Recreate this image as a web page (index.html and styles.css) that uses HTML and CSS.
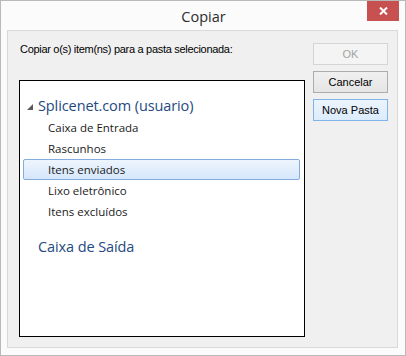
FILE: index.html
```html
<!DOCTYPE html>
<html lang="pt">
<head>
    <meta charset="UTF-8">
    <title>Copiar</title>
    <link rel="stylesheet" href="styles.css">
</head>
<body>
    <div class="window">
        <div class="titlebar">
            <span class="title">Copiar</span>
            <button class="close-btn" aria-label="Fechar">
                <svg width="9" height="8" viewBox="0 0 9 8">
                    <path d="M1 0.5 L8 7.5 M8 0.5 L1 7.5" stroke="#fff" stroke-width="2"/>
                </svg>
            </button>
        </div>
        <div class="client">
            <div class="main">
                <div class="prompt">Copiar o(s) item(ns) para a pasta selecionada:</div>
                <div class="tree">
                    <div class="node root">
                        <svg class="expander" width="6" height="6" viewBox="0 0 6 6">
                            <polygon points="6,0 6,6 0,6" fill="#595959"/>
                        </svg>
                        <span>Splicenet.com (usuario)</span>
                    </div>
                    <div class="node child">Caixa de Entrada</div>
                    <div class="node child">Rascunhos</div>
                    <div class="node child selected">Itens enviados</div>
                    <div class="node child">Lixo eletrônico</div>
                    <div class="node child">Itens excluídos</div>
                    <div class="node root outbox">Caixa de Saída</div>
                </div>
            </div>
            <div class="actions">
                <button class="btn" disabled>OK</button>
                <button class="btn">Cancelar</button>
                <button class="btn focused">Nova Pasta</button>
            </div>
        </div>
    </div>
</body>
</html>
```

FILE: styles.css
```css
html, body {
    margin: 0;
    padding: 0;
    background: #fff;
}
.window {
    width: 406px;
    height: 356px;
    box-sizing: border-box;
    border: 1px solid #b9b9b9;
    background-color: #fbfbfb;
    padding: 0 7px 7px 6px;
    display: flex;
    flex-direction: column;
}
.titlebar {
    height: 29px;
    position: relative;
    display: flex;
    align-items: center;
    justify-content: center;
}
.title {
    font-family: "Open Sans", "Noto Sans", sans-serif;
    font-size: 14.5px;
    color: #2b2b2b;
    margin-top: 2px;
    margin-left: 2px;
}
.close-btn {
    position: absolute;
    top: 0;
    right: -1px;
    width: 32px;
    height: 20px;
    border: none;
    padding: 0;
    background-color: #c75050;
    display: flex;
    align-items: center;
    justify-content: center;
}
.client {
    flex: 1;
    border: 1px solid #d9d9d9;
    background-color: #f0f0f0;
    padding: 12px 9px 10px 11px;
    display: flex;
    gap: 8px;
    font-family: "Liberation Sans", Arial, sans-serif;
    font-size: 11px;
    color: #000;
}
.main {
    width: 286px;
    display: flex;
    flex-direction: column;
}
.prompt {
    padding-left: 1px;
    line-height: 13px;
    height: 13px;
    margin-bottom: 24px;
    letter-spacing: -0.3px;
}
.tree {
    flex: 1;
    border: 1px solid #000;
    background-color: #fff;
    padding: 14px 4px 0 3px;
    font-family: "Open Sans", "Noto Sans", sans-serif;
}
.node {
    height: 21px;
    line-height: 20px;
    box-sizing: border-box;
    border: 1px solid transparent;
    border-radius: 2px;
    white-space: nowrap;
}
.root {
    display: flex;
    align-items: center;
    font-size: 14.5px;
    color: #25497f;
    padding-left: 14px;
    letter-spacing: -0.1px;
}
.root .expander {
    margin-left: -11px;
    margin-right: 5px;
    margin-top: 3px;
}
.child {
    font-size: 11.5px;
    color: #1a1a1a;
    padding-left: 24px;
}
.root + .child {
    margin-top: 1px;
}
.selected {
    border-color: #84acdd;
    background: linear-gradient(#eef5fd, #d5e7fc);
}
.outbox {
    margin-top: 14px;
}
.actions {
    width: 75px;
    display: flex;
    flex-direction: column;
    gap: 6px;
}
.btn {
    height: 22px;
    padding: 0;
    font-family: "Liberation Sans", Arial, sans-serif;
    font-size: 11px;
    color: #000;
    border: 1px solid #acacac;
    background: linear-gradient(#f0f0f0, #e5e5e5);
}
.btn:disabled {
    color: #a3a3a3;
    border-color: #d5d5d5;
    background: #f4f4f4;
}
.btn.focused {
    border-color: #7eb4ea;
    background: linear-gradient(#ecf4fc, #dcecfc);
}
```
